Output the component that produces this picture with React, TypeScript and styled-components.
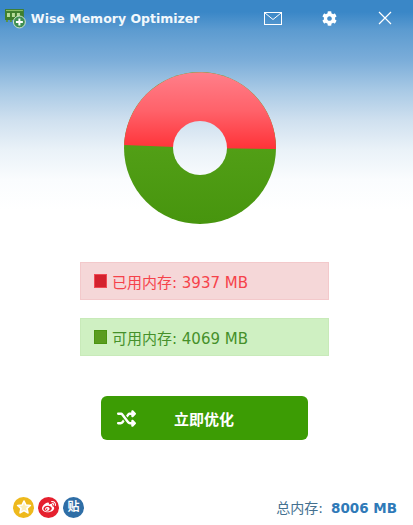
import React from "react";
import styled, { createGlobalStyle } from "styled-components";
import { FaCog, FaWeibo } from "react-icons/fa";
import { FaShuffle } from "react-icons/fa6";

const GlobalStyle = createGlobalStyle`
  html, body {
    margin: 0;
    padding: 0;
    background: #fff;
  }
`;

const Window = styled.div`
  width: 413px;
  height: 525px;
  overflow: hidden;
  display: flex;
  flex-direction: column;
  background: linear-gradient(to bottom, #3a87c7 0, #3a87c7 12px, #5c9bd0 30px, #7badd9 60px, #a8c9e5 90px, #cfe0ef 120px, #eaf2f8 150px, #fafcfe 180px, #fff 210px);
  font-family: "DejaVu Sans", "Noto Sans CJK SC", sans-serif;
`;

const TitleBar = styled.div`
  height: 36px;
  flex: none;
  display: flex;
  align-items: center;
  padding-left: 5px;
`;

const Title = styled.div`
  margin-left: 5px;
  width: 215px;
  font-size: 12.5px;
  font-weight: 700;
  color: #f2f8fc;
`;

const TitleButton = styled.div<{ $w: number }>`
  width: ${(p) => p.$w}px;
  display: flex;
  justify-content: center;
  align-items: center;
  color: #fff;
`;

const Chart = styled.div`
  height: 152px;
  margin-top: 36px;
  display: flex;
  justify-content: center;
  padding-right: 13px;
  flex: none;
`;

const Stat = styled.div<{ $bg: string; $edge: string; $fg: string }>`
  box-sizing: border-box;
  width: 249px;
  height: 38px;
  margin-left: 80px;
  padding-left: 13px;
  display: flex;
  align-items: center;
  gap: 5px;
  background: ${(p) => p.$bg};
  border: 1px solid ${(p) => p.$edge};
  color: ${(p) => p.$fg};
  font-size: 15px;
  flex: none;
`;

const Swatch = styled.span<{ $fill: string; $edge: string }>`
  width: 13px;
  height: 14px;
  box-sizing: border-box;
  background: ${(p) => p.$fill};
  border: 1px solid ${(p) => p.$edge};
`;

const Stats = styled.div`
  margin-top: 38px;
  display: flex;
  flex-direction: column;
  gap: 18px;
`;

const OptimizeButton = styled.button`
  width: 207px;
  height: 44px;
  margin: 40px 0 0 101px;
  padding: 0 0 0 16px;
  border: none;
  border-radius: 6px;
  background: #3c9c04;
  color: #fff;
  display: flex;
  align-items: center;
  font-family: inherit;
  font-size: 15px;
  font-weight: 700;
  flex: none;
`;

const ButtonLabel = styled.span`
  margin-left: 38px;
`;

const Footer = styled.div`
  margin-top: auto;
  height: 36px;
  display: flex;
  align-items: center;
  padding: 0 16px 0 13px;
  justify-content: space-between;
`;

const Badges = styled.div`
  display: flex;
  gap: 4px;
`;

const Badge = styled.div<{ $bg: string }>`
  width: 21px;
  height: 21px;
  border-radius: 50%;
  background: ${(p) => p.$bg};
  display: flex;
  align-items: center;
  justify-content: center;
  color: #fff;
`;

const BadgeText = styled.span`
  font-size: 12px;
  font-weight: 700;
  line-height: 1;
`;

const Total = styled.div`
  font-size: 14px;
  color: #44708f;
`;

const TotalValue = styled.b`
  color: #2f7ab8;
  font-size: 13.5px;
  margin-left: 8px;
`;

function AppLogo() {
  return (
    <svg width="21" height="22" viewBox="0 0 21 22">
      {/* memory stick with a plus badge */}
      <rect x="0" y="2" width="19" height="11" fill="#3f7f2c" />
      <path d="M1 3h17v1H1z" fill="#8fc36a" />
      <path d="M2 6h3v4H2zM7 6h3v4H7zM12 6h3v4h-3z" fill="#b6dc97" />
      <path d="M1 13h2v2H1zM5 13h2v2H5zM9 13h2v2H9z" fill="#5b9440" />
      <circle cx="14.500" cy="15" r="6" fill="#3f8f52" stroke="#cfe3cc" />
      <path d="M13.500 11.500h2V14H18v2h-2.500v2.500h-2V16H11v-2h2.500z" fill="#fff" />
    </svg>
  );
}

function Donut() {
  const outer = 76;
  const inner = 27;
  return (
    <svg width="152" height="152" viewBox="0 0 152 152">
      <defs>
        <linearGradient id="used" x1="0" y1="0" x2="0" y2="1">
          <stop offset="0" stopColor="#ff7f8a" />
          <stop offset="0.5" stopColor="#ff626a" />
          <stop offset="1" stopColor="#ff3238" />
        </linearGradient>
        <linearGradient id="free" x1="0" y1="0" x2="0" y2="1">
          <stop offset="0" stopColor="#5ca81e" />
          <stop offset="1" stopColor="#47950e" />
        </linearGradient>
        <mask id="hole">
          <rect width="152" height="152" fill="#fff" />
          <circle cx="76" cy="76" r={inner} fill="#000" />
        </mask>
      </defs>
      <g mask="url(#hole)">
        <circle cx="76" cy="76" r={outer} fill="url(#free)" />
        {/* 3937 of 8006 MB, so the slice is a touch under half */}
        <path d={`M0.06 73A${outer} ${outer} 0 0 1 151.99 77L76 76Z`} fill="url(#used)" />
      </g>
    </svg>
  );
}

export default function App() {
  return (
    <Window>
      <GlobalStyle />
      <TitleBar>
        <AppLogo />
        <Title>Wise Memory Optimizer</Title>
        <TitleButton $w={57}>
          <svg width="18" height="13" viewBox="0 0 18 13" fill="none" stroke="#fff">
            <rect x="0.5" y="0.5" width="17" height="12" />
            <path d="M1 1l8 6.500L17 1" />
          </svg>
        </TitleButton>
        <TitleButton $w={57}>
          <FaCog size={15} />
        </TitleButton>
        <TitleButton $w={56}>
          <svg width="14" height="14" viewBox="0 0 14 14" stroke="#fff" strokeWidth="1.200">
            <path d="M1 1l12 12M13 1L1 13" />
          </svg>
        </TitleButton>
      </TitleBar>
      <Chart>
        <Donut />
      </Chart>
      <Stats>
        <Stat $bg="#f5d7d8" $edge="#f3c9cb" $fg="#f5424a">
          <Swatch $fill="#d4222e" $edge="#f04a54" />
          已用内存: 3937 MB
        </Stat>
        <Stat $bg="#cff0c2" $edge="#c8eab9" $fg="#45902a">
          <Swatch $fill="#5a9c1f" $edge="#4a9410" />
          可用内存: 4069 MB
        </Stat>
      </Stats>
      <OptimizeButton>
        <FaShuffle size={19} />
        <ButtonLabel>立即优化</ButtonLabel>
      </OptimizeButton>
      <Footer>
        <Badges>
          <Badge $bg="#eeb91c">
            <svg width="16" height="16" viewBox="0 0 24 24" fill="#fbeeb8" stroke="#fff" strokeWidth="2.500" strokeLinejoin="round">
              <path d="M12 3l2.800 6 6.700.7-5 4.500 1.400 6.600-5.900-3.400-5.900 3.400 1.400-6.600-5-4.500L9.200 9z" />
            </svg>
          </Badge>
          <Badge $bg="#e5202e">
            <FaWeibo size={14} />
          </Badge>
          <Badge $bg="#2f6ea6">
            <BadgeText>贴</BadgeText>
          </Badge>
        </Badges>
        <Total>
          总内存:
          <TotalValue>8006 MB</TotalValue>
        </Total>
      </Footer>
    </Window>
  );
}
